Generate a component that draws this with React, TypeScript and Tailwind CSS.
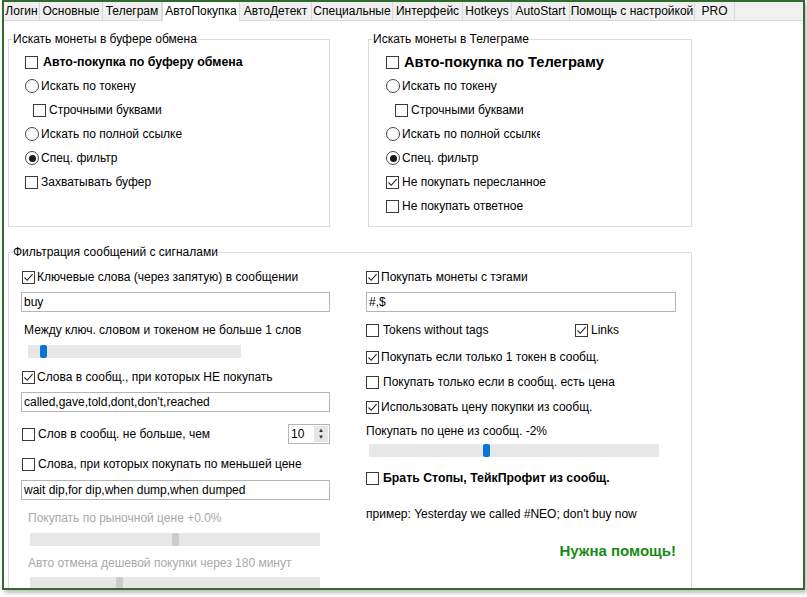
import type { ReactNode } from "react";

const tabs = [
  { label: "Логин", w: "w-[36px]" },
  { label: "Основные", w: "w-[63px]" },
  { label: "Телеграм", w: "w-[59px]" },
  { label: "АвтоПокупка", w: "w-[78px]", active: true },
  { label: "АвтоДетект", w: "w-[72px]" },
  { label: "Специальные", w: "w-[81px]" },
  { label: "Интерфейс", w: "w-[70px]" },
  { label: "Hotkeys", w: "w-[49px]" },
  { label: "AutoStart", w: "w-[58px]" },
  { label: "Помощь с настройкой", w: "w-[125px]" },
  { label: "PRO", w: "w-[40px]" },
];

function CheckBox({ checked = false }: { checked?: boolean }) {
  return (
    <span className="flex h-[13px] w-[13px] shrink-0 items-center justify-center border border-[#3a3a3a] bg-white">
      {checked && (
        <svg viewBox="0 0 11 11" className="h-[11px] w-[11px]">
          <path d="M1.5 5.5 L4.2 8.3 L9.6 2.2" stroke="#222" strokeWidth="1.1" fill="none" />
        </svg>
      )}
    </span>
  );
}

function Radio({ checked = false }: { checked?: boolean }) {
  return (
    <span className="flex h-[14px] w-[14px] shrink-0 items-center justify-center rounded-full border border-[#444444] bg-white">
      {checked && <span className="h-[7px] w-[7px] rounded-full bg-[#1a1a1a]" />}
    </span>
  );
}

function Row({ children, className = "" }: { children: ReactNode; className?: string }) {
  return <div className={`flex h-[24px] items-center whitespace-nowrap ${className}`}>{children}</div>;
}

function TextBox({ value, className = "" }: { value: string; className?: string }) {
  return (
    <div className={`flex h-[20px] items-center border border-[#b5b5b5] bg-white px-[2px] ${className}`}>
      {value}
    </div>
  );
}

function Slider({ pos, disabled = false, className = "" }: { pos: string; disabled?: boolean; className?: string }) {
  return (
    <div className={`relative h-[13px] w-[290px] bg-[#e7e7e7] ${className}`}>
      <span
        className={`absolute top-0 h-[13px] w-[7px] rounded-[2px] ${disabled ? "bg-[#cccccc]" : "bg-[#0a74d6]"}`}
        style={{ left: pos }}
      />
    </div>
  );
}

export default function App() {
  return (
    <div className="h-[597px] w-[807px] bg-white font-['Liberation_Sans',Arial,sans-serif] text-[12px] text-black">
      <div className="ml-[2px] h-[590px] w-[803px] overflow-hidden border-2 border-[#2f6b2f] shadow-[2px_3px_4px_rgba(0,0,0,0.25)]">
        {/* tab strip */}
        <div className="flex h-[19px] border-b border-[#d9d9d9] bg-[#f0f0f0]">
          {tabs.map((t) => (
            <div
              key={t.label}
              className={`flex shrink-0 items-center justify-center whitespace-nowrap border-r border-[#d9d9d9] ${t.w} ${
                t.active ? "-mt-[2px] h-[21px] border-l bg-white" : ""
              }`}
            >
              {t.label}
            </div>
          ))}
        </div>

        <div className="pl-[4px]">
          {/* top groups */}
          <div className="mt-[11px] flex gap-[38px]">
            <fieldset className="h-[195px] w-[322px] border border-[#dcdcdc]">
              <legend className="ml-[4px] h-[14px] leading-[14px]">Искать монеты в буфере обмена</legend>
              <div className="pl-[16px] pt-[4px]">
                <Row className="gap-[5px]">
                  <CheckBox />
                  <span className="text-[12.4px] font-bold">Авто-покупка по буферу обмена</span>
                </Row>
                <Row className="gap-[2px]">
                  <Radio />
                  <span>Искать по токену</span>
                </Row>
                <Row className="ml-[8px] gap-[3px]">
                  <CheckBox />
                  <span>Строчными буквами</span>
                </Row>
                <Row className="gap-[2px]">
                  <Radio />
                  <span>Искать по полной ссылке</span>
                </Row>
                <Row className="gap-[2px]">
                  <Radio checked />
                  <span>Спец. фильтр</span>
                </Row>
                <Row className="gap-[3px]">
                  <CheckBox />
                  <span>Захватывать буфер</span>
                </Row>
              </div>
            </fieldset>

            <fieldset className="h-[195px] w-[324px] border border-[#dcdcdc]">
              <legend className="ml-[4px] h-[14px] leading-[14px]">Искать монеты в Телеграме</legend>
              <div className="pl-[17px] pt-[4px]">
                <Row className="gap-[5px]">
                  <CheckBox />
                  <span className="text-[14.7px] font-bold">Авто-покупка по Телеграму</span>
                </Row>
                <Row className="gap-[2px]">
                  <Radio />
                  <span>Искать по токену</span>
                </Row>
                <Row className="ml-[9px] gap-[3px]">
                  <CheckBox />
                  <span>Строчными буквами</span>
                </Row>
                <Row className="gap-[2px]">
                  <Radio />
                  <span className="w-[138px] overflow-hidden">Искать по полной ссылке</span>
                </Row>
                <Row className="gap-[2px]">
                  <Radio checked />
                  <span>Спец. фильтр</span>
                </Row>
                <Row className="gap-[3px]">
                  <CheckBox checked />
                  <span>Не покупать пересланное</span>
                </Row>
                <Row className="gap-[3px]">
                  <CheckBox />
                  <span>Не покупать ответное</span>
                </Row>
              </div>
            </fieldset>
          </div>

          {/* signal filter group */}
          <fieldset className="mt-[18px] h-[360px] w-[684px] border border-[#dcdcdc]">
            <legend className="ml-[4px] h-[14px] leading-[14px]">Фильтрация сообщений с сигналами</legend>
            <div className="flex gap-[36px] pl-[12px] pt-[6px]">
              {/* left column */}
              <div className="flex w-[309px] flex-col">
                <Row className="ml-px gap-[2px]">
                  <CheckBox checked />
                  <span>Ключевые слова (через запятую) в сообщении</span>
                </Row>
                <TextBox value="buy" className="mt-[3px]" />
                <Row className="ml-[3px] mt-[6px]">Между ключ. словом и токеном не больше 1 слов</Row>
                <Slider pos="12px" className="ml-[7px] mt-[3px] !w-[213px]" />
                <Row className="ml-px mt-[7px] gap-[2px]">
                  <CheckBox checked />
                  <span>Слова в сообщ., при которых НЕ покупать</span>
                </Row>
                <TextBox value="called,gave,told,dont,don't,reached" className="mt-[3px]" />
                <Row className="ml-px mt-[10px] gap-[3px]">
                  <CheckBox />
                  <span>Слов в сообщ. не больше, чем</span>
                  <div className="ml-auto flex h-[20px] w-[42px] items-center border border-[#b5b5b5] bg-white pl-[2px]">
                    <span className="flex-1">10</span>
                    <div className="mr-[1px] flex h-[16px] w-[14px] flex-col items-center justify-center bg-[#e6e6e6] text-[6px] leading-[7px] text-[#333]">
                      <span>▲</span>
                      <span>▼</span>
                    </div>
                  </div>
                </Row>
                <Row className="ml-px mt-[6px] gap-[3px]">
                  <CheckBox />
                  <span>Слова, при которых покупать по меньшей цене</span>
                </Row>
                <TextBox value="wait dip,for dip,when dump,when dumped" className="mt-[4px]" />
                <Row className="ml-[7px] mt-[6px] text-[#a9a9a9]">Покупать по рыночной цене +0.0%</Row>
                <Slider pos="142px" disabled className="ml-[9px] mt-[3px]" />
                <Row className="ml-[7px] mt-[5px] text-[#a9a9a9]">Авто отмена дешевой покупки через 180 минут</Row>
                <Slider pos="86px" disabled className="ml-[9px] mt-[2px]" />
              </div>

              {/* right column */}
              <div className="flex w-[310px] flex-col">
                <Row className="gap-[2px]">
                  <CheckBox checked />
                  <span>Покупать монеты с тэгами</span>
                </Row>
                <TextBox value="#,$" className="mt-[3px]" />
                <Row className="mt-[6px]">
                  <div className="flex w-[209px] items-center gap-[4px]">
                    <CheckBox />
                    <span>Tokens without tags</span>
                  </div>
                  <div className="flex items-center gap-[3px]">
                    <CheckBox checked />
                    <span>Links</span>
                  </div>
                </Row>
                <Row className="mt-[3px] gap-[2px]">
                  <CheckBox checked />
                  <span>Покупать если только 1 токен в сообщ.</span>
                </Row>
                <Row className="mt-[1px] gap-[4px]">
                  <CheckBox />
                  <span>Покупать только если в сообщ. есть цена</span>
                </Row>
                <Row className="mt-[1px] gap-[2px]">
                  <CheckBox checked />
                  <span>Использовать цену покупки из сообщ.</span>
                </Row>
                <Row>Покупать по цене из сообщ. -2%</Row>
                <Slider pos="114px" className="ml-[3px] mt-[1px]" />
                <Row className="mt-[9px] gap-[4px]">
                  <CheckBox />
                  <span className="text-[12.3px] font-bold">Брать Стопы, ТейкПрофит из сообщ.</span>
                </Row>
                <Row className="mt-[12px]">пример: Yesterday we called #NEO; don't buy now</Row>
                <Row className="mt-[13px] justify-end text-[15px] font-bold text-[#168a16]">Нужна помощь!</Row>
              </div>
            </div>
          </fieldset>
        </div>
      </div>
    </div>
  );
}
